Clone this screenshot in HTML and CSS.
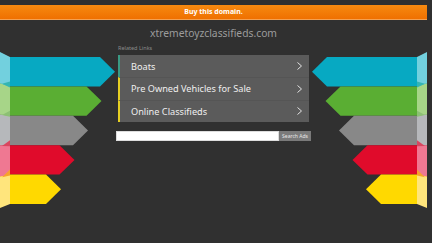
FILE: index.html
```html
<!DOCTYPE html>
<html lang="en">
    <head>
        <meta charset="UTF-8" />
        <meta name="viewport" content="width=device-width, initial-scale=1.0" />
        <title>xtremetoyzclassifieds.com</title>
        <link rel="stylesheet" href="styles.css">
    </head>
    <body>
        <div class="page">
            <div class="buy-bar">Buy this domain.</div>
            <h1 class="domain-title">xtremetoyzclassifieds.com</h1>

            <div class="main">
                <svg class="arrows" viewBox="0 50 116 160" width="116" height="160">
                    <polygon fill="#07a9c2" points="0,57 100,57 115,71.7 100,86.4 0,86.4" />
                    <polygon fill="#5aae33" points="0,86.4 86.5,86.4 101.5,101.1 86.5,115.8 0,115.8" />
                    <polygon fill="#888888" points="0,115.8 73,115.8 88,130.5 73,145.2 0,145.2" />
                    <polygon fill="#e00b2b" points="0,145.2 59.5,145.2 74.5,159.9 59.5,174.6 0,174.6" />
                    <polygon fill="#ffd900" points="0,174.6 46,174.6 61,189.3 46,204 0,204" />

                    <polygon fill="#72d0de" points="10,57 0,52 0,83.2 10,86.4" />
                    <polygon fill="#a7d588" points="10,86.4 0,83.2 0,114.4 10,115.8" />
                    <polygon fill="#b6b8bb" points="10,115.8 0,114.4 0,145.6 10,145.2" />
                    <polygon fill="#ef7892" points="10,145.2 0,145.6 0,176.8 10,174.6" />
                    <polygon fill="#ffe57c" points="10,174.6 0,176.8 0,208 10,204" />

                    <polygon fill="#34b5b3" points="10,81.4 10,87.4 2,83.7" />
                    <polygon fill="#8cc074" points="10,110.8 10,116.8 2,114.9" />
                    <polygon fill="#d9465f" points="10,140.2 10,146.2 2,146.1" />
                    <polygon fill="#f7a22c" points="10,169.6 10,175.6 2,177.3" />
                </svg>

                <div class="center">
                    <div class="related-label">Related Links</div>
                    <ul class="link-list">
                        <li class="link-item link-first">
                            <span>Boats</span>
                            <svg class="chevron" viewBox="0 0 5 8" width="5" height="8"><polyline points="0.5,0.5 4.5,4 0.5,7.5" /></svg>
                        </li>
                        <li class="link-item">
                            <span>Pre Owned Vehicles for Sale</span>
                            <svg class="chevron" viewBox="0 0 5 8" width="5" height="8"><polyline points="0.5,0.5 4.5,4 0.5,7.5" /></svg>
                        </li>
                        <li class="link-item">
                            <span>Online Classifieds</span>
                            <svg class="chevron" viewBox="0 0 5 8" width="5" height="8"><polyline points="0.5,0.5 4.5,4 0.5,7.5" /></svg>
                        </li>
                    </ul>
                    <form class="search-row">
                        <input class="search-input" type="text" />
                        <button class="search-btn" type="button">Search Ads</button>
                    </form>
                </div>

                <svg class="arrows arrows-right" viewBox="0 50 116 160" width="116" height="160">
                    <polygon fill="#07a9c2" points="0,57 100,57 115,71.7 100,86.4 0,86.4" />
                    <polygon fill="#5aae33" points="0,86.4 86.5,86.4 101.5,101.1 86.5,115.8 0,115.8" />
                    <polygon fill="#888888" points="0,115.8 73,115.8 88,130.5 73,145.2 0,145.2" />
                    <polygon fill="#e00b2b" points="0,145.2 59.5,145.2 74.5,159.9 59.5,174.6 0,174.6" />
                    <polygon fill="#ffd900" points="0,174.6 46,174.6 61,189.3 46,204 0,204" />

                    <polygon fill="#72d0de" points="10,57 0,52 0,83.2 10,86.4" />
                    <polygon fill="#a7d588" points="10,86.4 0,83.2 0,114.4 10,115.8" />
                    <polygon fill="#b6b8bb" points="10,115.8 0,114.4 0,145.6 10,145.2" />
                    <polygon fill="#ef7892" points="10,145.2 0,145.6 0,176.8 10,174.6" />
                    <polygon fill="#ffe57c" points="10,174.6 0,176.8 0,208 10,204" />

                    <polygon fill="#34b5b3" points="10,81.4 10,87.4 2,83.7" />
                    <polygon fill="#8cc074" points="10,110.8 10,116.8 2,114.9" />
                    <polygon fill="#d9465f" points="10,140.2 10,146.2 2,146.1" />
                    <polygon fill="#f7a22c" points="10,169.6 10,175.6 2,177.3" />
                </svg>
            </div>
        </div>
    </body>
</html>
```

FILE: styles.css
```css
html,
body,
h1,
ul,
li,
form {
    padding: 0;
    margin: 0;
}
ul,
li {
    list-style: none;
}
html,
body {
    height: 100%;
    background-color: #303030;
}
body {
    font-family: "Noto Sans", "Open Sans", sans-serif;
}

.page {
    width: 427px;
    padding-top: 5px;
}

.buy-bar {
    height: 14px;
    line-height: 14px;
    background: linear-gradient(#f78a10, #ef7000);
    color: #fff;
    font-size: 7px;
    font-weight: bold;
    text-align: center;
    border-bottom: 1px solid #f3a050;
}

.domain-title {
    margin-top: 6px;
    font-size: 10.3px;
    line-height: 14px;
    font-weight: normal;
    color: #9c9c9c;
    text-align: center;
}

.main {
    display: grid;
    grid-template-columns: 116px 195px 116px;
    margin-top: 5px;
}

.arrows {
    display: block;
    margin-top: 5px;
}
.arrows-right {
    transform: scaleX(-1);
}

.center {
    min-width: 0;
}
.related-label {
    font-size: 5.5px;
    line-height: 7px;
    color: #8a8a8a;
    padding-left: 2px;
}
.link-list {
    margin: 3px 2px 0 2px;
    background-color: #5b5b5b;
}
.link-item {
    display: flex;
    align-items: center;
    justify-content: space-between;
    height: 22.3px;
    padding: 0 7px 0 11px;
    border-left: 2px solid #e6cf22;
    color: #efefef;
    font-size: 9.2px;
    box-sizing: border-box;
}
.link-item + .link-item {
    border-top: 1px solid #555;
}
.link-first {
    border-left-color: #3a9a84;
}
.chevron {
    fill: none;
    stroke: #e2e2e2;
    stroke-width: 1;
}

.search-row {
    display: flex;
    margin-top: 9px;
    height: 10px;
}
.search-input {
    flex: 1;
    width: 0;
    min-width: 0;
    height: 10px;
    padding: 0;
    border: 1px solid #ddd;
    box-sizing: border-box;
    background-color: #fff;
}
.search-btn {
    width: 32px;
    height: 10px;
    padding: 0;
    border: none;
    background-color: #7a7a7a;
    color: #e8e8e8;
    font-family: "Noto Sans", sans-serif;
    font-size: 5px;
    line-height: 10px;
    white-space: nowrap;
}
```
